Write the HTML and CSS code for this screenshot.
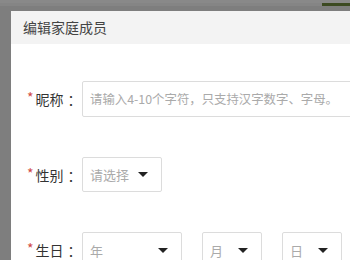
FILE: index.html
```html
<!DOCTYPE html>
<html lang="zh-CN">
<head>
  <meta charset="UTF-8" />
  <meta name="viewport" content="width=device-width, initial-scale=1.0"/>
  <title>编辑家庭成员</title>
  <link rel="stylesheet" href="styles.css">
</head>
<body>
  <div class="topbar">
    <span class="topbar-line"></span>
  </div>

  <div class="dialog">
    <div class="dialog-head">编辑家庭成员</div>

    <div class="dialog-body">
      <div class="row">
        <label class="label"><span class="req">*</span>昵称<span class="colon">：</span></label>
        <div class="field field-text">请输入4-10个字符，只支持汉字数字、字母。</div>
      </div>

      <div class="row">
        <label class="label"><span class="req">*</span>性别<span class="colon">：</span></label>
        <div class="field field-select w-sex">
          <span>请选择</span>
          <i class="caret"></i>
        </div>
      </div>

      <div class="row">
        <label class="label"><span class="req">*</span>生日<span class="colon">：</span></label>
        <div class="field field-select w-year">
          <span>年</span>
          <i class="caret"></i>
        </div>
        <div class="field field-select w-small">
          <span>月</span>
          <i class="caret"></i>
        </div>
        <div class="field field-select w-small">
          <span>日</span>
          <i class="caret"></i>
        </div>
      </div>
    </div>
  </div>
</body>
</html>
```

FILE: styles.css
```css
body {
  margin: 0;
  padding: 0;
  width: 350px;
  height: 260px;
  overflow: hidden;
  background: #7e7e7e;
  font-family: "Noto Sans CJK SC", "Liberation Sans", sans-serif;
}
.topbar {
  height: 11px;
  background: linear-gradient(#898989 0, #898989 3px, #858585 3px, #858585 6px, #7e7e7e 6px);
  display: flex;
  justify-content: flex-end;
}
.topbar-line {
  width: 28px;
  height: 3px;
  margin-top: 3px;
  background: #3c4a22;
}
.dialog {
  margin-left: 11px;
  width: 339px;
  height: 249px;
  overflow: hidden;
  background: #fff;
}
.dialog-head {
  height: 33px;
  line-height: 33px;
  padding-left: 12px;
  background: #f3f3f3;
  color: #444;
  font-size: 14px;
}
.dialog-body {
  padding: 37px 0 0 16px;
}
.row {
  display: flex;
  align-items: center;
  margin-bottom: 40px;
}
.label {
  flex: none;
  width: 55px;
  font-size: 14px;
  color: #333;
  white-space: nowrap;
}
.req {
  color: #d04a45;
  margin-right: 2px;
  position: relative;
  top: -2px;
}
.colon {
  font-family: "Noto Sans CJK TC", sans-serif;
  margin-left: 4px;
}
.field {
  flex: none;
  box-sizing: border-box;
  height: 36px;
  border: 1px solid #dcdcdc;
  border-radius: 2px;
  padding-left: 7px;
  font-size: 12.4px;
  color: #aaa;
  display: flex;
  align-items: center;
  white-space: nowrap;
}
.field-text {
  width: 400px;
}
.field-select {
  justify-content: space-between;
  padding-right: 13px;
  font-size: 13px;
  margin-right: 20px;
}
.w-sex {
  width: 80px;
  height: 35px;
}
.w-year {
  width: 100px;
}
.w-small {
  width: 60px;
}
.caret {
  width: 0;
  height: 0;
  border-left: 5px solid transparent;
  border-right: 5px solid transparent;
  border-top: 5px solid #222;
}
```
